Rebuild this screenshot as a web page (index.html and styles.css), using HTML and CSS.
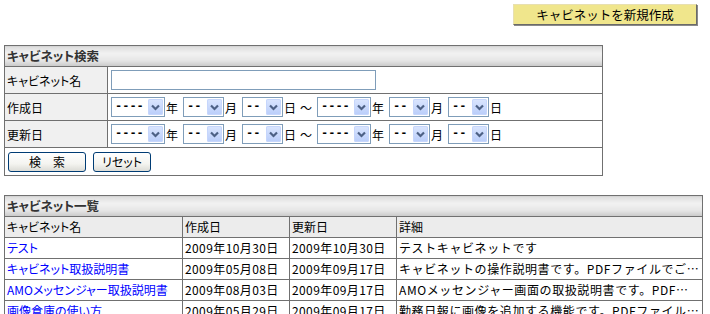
FILE: index.html
```html
<!DOCTYPE html>
<html lang="ja">
<head>
<meta charset="utf-8">
<title>キャビネット</title>
<link rel="stylesheet" href="styles.css">
</head>
<body>
<div class="page">
  <div class="topbar">
    <button class="btn-new" type="button">キャビネットを新規作成</button>
  </div>

  <table class="search">
    <colgroup><col class="c-label"><col></colgroup>
    <tr><th class="cap" colspan="2">キャビネット検索</th></tr>
    <tr>
      <td class="label">キャビネット名</td>
      <td class="val"><span class="txt"></span></td>
    </tr>
    <tr>
      <td class="label">作成日</td>
      <td class="val">
        <div class="dates">
          <span class="sel y"><span class="v">----</span><span class="arr"><svg width="15" height="16" viewBox="0 0 15 16"><path d="M4 6.5 L7.5 10 L11 6.5" fill="none" stroke="#4d6185" stroke-width="2.2"/></svg></span></span><span class="u">年</span>
          <span class="sel m"><span class="v">--</span><span class="arr"><svg width="15" height="16" viewBox="0 0 15 16"><path d="M4 6.5 L7.5 10 L11 6.5" fill="none" stroke="#4d6185" stroke-width="2.2"/></svg></span></span><span class="u">月</span>
          <span class="sel m"><span class="v">--</span><span class="arr"><svg width="15" height="16" viewBox="0 0 15 16"><path d="M4 6.5 L7.5 10 L11 6.5" fill="none" stroke="#4d6185" stroke-width="2.2"/></svg></span></span><span class="u">日</span><span class="tilde">～</span>
          <span class="sel y"><span class="v">----</span><span class="arr"><svg width="15" height="16" viewBox="0 0 15 16"><path d="M4 6.5 L7.5 10 L11 6.5" fill="none" stroke="#4d6185" stroke-width="2.2"/></svg></span></span><span class="u">年</span>
          <span class="sel m"><span class="v">--</span><span class="arr"><svg width="15" height="16" viewBox="0 0 15 16"><path d="M4 6.5 L7.5 10 L11 6.5" fill="none" stroke="#4d6185" stroke-width="2.2"/></svg></span></span><span class="u">月</span>
          <span class="sel m"><span class="v">--</span><span class="arr"><svg width="15" height="16" viewBox="0 0 15 16"><path d="M4 6.5 L7.5 10 L11 6.5" fill="none" stroke="#4d6185" stroke-width="2.2"/></svg></span></span><span class="u">日</span>
        </div>
      </td>
    </tr>
    <tr>
      <td class="label">更新日</td>
      <td class="val">
        <div class="dates">
          <span class="sel y"><span class="v">----</span><span class="arr"><svg width="15" height="16" viewBox="0 0 15 16"><path d="M4 6.5 L7.5 10 L11 6.5" fill="none" stroke="#4d6185" stroke-width="2.2"/></svg></span></span><span class="u">年</span>
          <span class="sel m"><span class="v">--</span><span class="arr"><svg width="15" height="16" viewBox="0 0 15 16"><path d="M4 6.5 L7.5 10 L11 6.5" fill="none" stroke="#4d6185" stroke-width="2.2"/></svg></span></span><span class="u">月</span>
          <span class="sel m"><span class="v">--</span><span class="arr"><svg width="15" height="16" viewBox="0 0 15 16"><path d="M4 6.5 L7.5 10 L11 6.5" fill="none" stroke="#4d6185" stroke-width="2.2"/></svg></span></span><span class="u">日</span><span class="tilde">～</span>
          <span class="sel y"><span class="v">----</span><span class="arr"><svg width="15" height="16" viewBox="0 0 15 16"><path d="M4 6.5 L7.5 10 L11 6.5" fill="none" stroke="#4d6185" stroke-width="2.2"/></svg></span></span><span class="u">年</span>
          <span class="sel m"><span class="v">--</span><span class="arr"><svg width="15" height="16" viewBox="0 0 15 16"><path d="M4 6.5 L7.5 10 L11 6.5" fill="none" stroke="#4d6185" stroke-width="2.2"/></svg></span></span><span class="u">月</span>
          <span class="sel m"><span class="v">--</span><span class="arr"><svg width="15" height="16" viewBox="0 0 15 16"><path d="M4 6.5 L7.5 10 L11 6.5" fill="none" stroke="#4d6185" stroke-width="2.2"/></svg></span></span><span class="u">日</span>
        </div>
      </td>
    </tr>
    <tr>
      <td class="actions" colspan="2">
        <div class="btns">
          <button class="btn xp wide" type="button">検　索</button>
          <button class="btn xp" type="button">リセット</button>
        </div>
      </td>
    </tr>
  </table>

  <table class="list">
    <colgroup><col class="c1"><col class="c2"><col class="c3"><col></colgroup>
    <tr><th class="cap" colspan="4">キャビネット一覧</th></tr>
    <tr class="head">
      <td>キャビネット名</td><td>作成日</td><td>更新日</td><td>詳細</td>
    </tr>
    <tr>
      <td><a href="#">テスト</a></td><td class="d">2009年10月30日</td><td class="d">2009年10月30日</td><td class="det">テストキャビネットです</td>
    </tr>
    <tr>
      <td><a href="#">キャビネット取扱説明書</a></td><td class="d">2009年05月08日</td><td class="d">2009年09月17日</td><td class="det">キャビネットの操作説明書です。PDFファイルでご覧いただけます。</td>
    </tr>
    <tr>
      <td><a href="#">AMOメッセンジャー取扱説明書</a></td><td class="d">2009年08月03日</td><td class="d">2009年09月17日</td><td class="det">AMOメッセンジャー画面の取扱説明書です。PDFファイルでご覧いただけます。</td>
    </tr>
    <tr>
      <td><a href="#">画像倉庫の使い方</a></td><td class="d">2009年05月29日</td><td class="d">2009年09月17日</td><td class="det">勤務日報に画像を追加する機能です。PDFファイルでご覧いただけます。</td>
    </tr>
  </table>
</div>
</body>
</html>
```

FILE: styles.css
```css
html, body {
  margin: 0;
  padding: 0;
  background: #fff;
}
body {
  font-family: "Noto Sans CJK JP", "Noto Sans", sans-serif;
  font-size: 12px;
  color: #000;
  font-feature-settings: "palt";
}
.page {
  padding: 4px 0 0 4px;
  width: 699px;
}
.topbar {
  display: flex;
  justify-content: flex-end;
  padding-right: 6px;
  height: 41px;
}
.btn-new {
  width: 184px;
  height: 21px;
  padding: 0;
  font: inherit;
  font-size: 12.5px;
  line-height: 17px;
  color: #000;
  background: #f0e68c;
  border: 1px solid;
  border-color: #e8e0b0 #6a6a6a #6a6a6a #e8e0b0;
  box-shadow: 1px 1px 0 #8a8a8a;
  font-feature-settings: normal;
}
table {
  border-collapse: collapse;
  table-layout: fixed;
}
.search {
  width: 599px;
  border: 1px solid #707070;
}
.c-label { width: 103px; }
th.cap {
  height: 20px;
  padding: 0 2px;
  text-align: left;
  font-weight: bold;
  font-size: 12.5px;
  color: #333;
  border: 1px solid #707070;
  background: linear-gradient(#dcdcdc, #f2f2f2 35%, #e6e6e6 70%, #c8c8c8);
  line-height: 18px;
}
.search td {
  border: 1px solid #707070;
  height: 26px;
  padding: 0 2px;
}
.search td.label {
  background: #f0f0f0;
}
.search td.val {
  padding: 0 3px;
}
.txt {
  display: block;
  width: 265px;
  height: 20px;
  box-sizing: border-box;
  border: 1px solid #7f9db9;
  background: #fff;
}
.dates {
  display: flex;
  align-items: center;
}
.sel {
  display: inline-flex;
  align-items: center;
  box-sizing: border-box;
  height: 20px;
  border: 1px solid #7f9db9;
  background: #fff;
}
.sel.y { width: 54px; }
.sel.m { width: 41px; }
.sel .v {
  flex: 1;
  padding-left: 3px;
  font-family: "Liberation Mono", monospace;
  font-size: 12px;
  font-weight: bold;
  line-height: 16px;
}
.sel .arr {
  display: flex;
  width: 15px;
  height: 16px;
  margin-right: 1px;
  border-radius: 2px;
  background: linear-gradient(#dbe6fe, #b9cdfa);
  box-shadow: inset 0 0 0 1px #c6d6fc;
}
.u {
  width: 12px;
  margin: 0 5px 0 1px;
}
.tilde {
  margin: 0 5px 0 -1px;
}
.search td.actions {
  height: 27px;
  padding: 0 3px;
}
.btns {
  display: flex;
  gap: 7px;
}
.btn.xp {
  height: 20px;
  padding: 0 6px;
  font: inherit;
  font-size: 12px;
  line-height: 16px;
  color: #000;
  border: 1px solid #003c74;
  border-radius: 3px;
  background: linear-gradient(#ffffff, #f4f4f0 60%, #dcdcd6);
}
.btn.wide { width: 78px; }
.btn.xp:not(.wide) { width: 58px; padding: 0; }

.list {
  margin-top: 19px;
  width: 699px;
  border: 1px solid #707070;
}
.c1 { width: 178px; }
.c2 { width: 107px; }
.c3 { width: 107px; }
.list td {
  border: 1px solid #707070;
  height: 20px;
  padding: 0 2px;
  white-space: nowrap;
  overflow: hidden;
  text-overflow: ellipsis;
  line-height: 18px;
}
.list td.d {
  letter-spacing: 0.4px;
}
.list td.det {
  font-feature-settings: normal;
  letter-spacing: 0.6px;
}
.list tr.head td {
  background: #ececec;
}
.list a {
  color: #0000ff;
  text-decoration: none;
}
```
